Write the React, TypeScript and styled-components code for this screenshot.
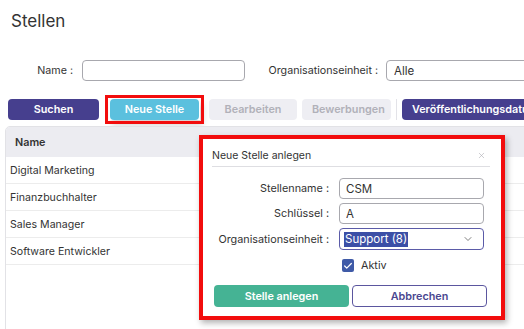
import styled, { createGlobalStyle } from 'styled-components';
import { ChevronDown, Check, X } from 'lucide-react';

const GlobalStyle = createGlobalStyle`
  body {
    margin: 0;
    background: #fff;
    font-family: Inter, 'Noto Sans', sans-serif;
    color: #333;
    overflow: hidden;
  }
  * {
    box-sizing: border-box;
  }
`;

const Page = styled.div`
  width: 524px;
  height: 329px;
  overflow: hidden;
  position: relative;
`;

const Title = styled.h1`
  margin: 0;
  padding: 10px 0 0 11px;
  font-size: 17px;
  font-weight: 400;
  line-height: 22px;
  color: #333;
`;

const FilterRow = styled.div`
  display: flex;
  align-items: center;
  margin-top: 28px;
  height: 21px;
  white-space: nowrap;
`;

const FilterLabel = styled.label<{ $width: number }>`
  width: ${(p) => p.$width}px;
  text-align: right;
  font-size: 10.7px;
  color: #333;
  flex-shrink: 0;
`;

const TextInput = styled.input<{ $width: number }>`
  width: ${(p) => p.$width}px;
  height: 21px;
  flex-shrink: 0;
  border: 1px solid #a8a8ae;
  border-radius: 4px;
  padding: 0 7px;
  font: 11.5px Inter, sans-serif;
  color: #333;
  outline: none;
`;

const ButtonRow = styled.div`
  display: flex;
  align-items: center;
  height: 21px;
  margin-top: 18px;
  padding-left: 8px;
  white-space: nowrap;
`;

const ToolButton = styled.button<{ $variant: 'primary' | 'info' | 'disabled' }>`
  display: block;
  height: 21px;
  flex-shrink: 0;
  border: none;
  border-radius: 4px;
  padding: 0 10px;
  font: 600 10.8px Inter, sans-serif;
  background: ${(p) =>
    p.$variant === 'primary' ? '#463f8e' : p.$variant === 'info' ? '#5bc0de' : '#eeeef3'};
  color: ${(p) => (p.$variant === 'disabled' ? '#b1b1b9' : '#fff')};
`;

const Highlight = styled.div`
  display: flex;
  flex-shrink: 0;
  padding: 0 1px;
  outline: 3px solid #f20d0d;
  outline-offset: 1px;
  box-shadow: 3px 5px 6px rgba(0, 0, 0, 0.18);
`;

const Divider = styled.span`
  width: 1px;
  height: 21px;
  background: #e3e3e8;
  margin: 0 5px;
  flex-shrink: 0;
`;

const TableArea = styled.div`
  position: relative;
  margin: 6px 0 0 5px;
`;

const Table = styled.div`
  width: 540px;
  height: 220px;
  border: 1px solid #e2e2e6;
  border-radius: 5px;
  overflow: hidden;
`;

const HeaderRow = styled.div`
  height: 30px;
  display: flex;
  align-items: center;
  padding-left: 9px;
  background: #ececf1;
  font-size: 10.8px;
  font-weight: 600;
  color: #333;
`;

const Row = styled.div`
  height: 27px;
  display: flex;
  align-items: center;
  padding-left: 4px;
  border-bottom: 1px solid #ececec;
  font-size: 10.6px;
  color: #333;
`;

const Modal = styled.div`
  position: absolute;
  left: 194px;
  top: 9px;
  width: 306px;
  height: 185px;
  background: #fff;
  border: 4px solid #f20d0d;
  box-shadow: 2px 3px 6px rgba(0, 0, 0, 0.3);
  padding: 0 11px 0 9px;
`;

const ModalHeader = styled.div`
  display: flex;
  justify-content: space-between;
  align-items: center;
  height: 28px;
  padding: 5px 4px 0 0;
  border-bottom: 1px solid #dedee2;
  font-size: 10.5px;
  color: #333;
`;

const CloseIcon = styled(X)`
  color: #a8a8ae;
`;

const Form = styled.div`
  display: grid;
  grid-template-columns: 117px 145px;
  column-gap: 10px;
  row-gap: 4px;
  align-items: center;
  margin-top: 11px;
`;

const FormLabel = styled.label`
  text-align: right;
  font-size: 10.8px;
  color: #333;
  white-space: nowrap;
`;

const FormInput = styled.input`
  width: 145px;
  height: 21px;
  border: 1px solid #a8a8ae;
  border-radius: 4px;
  padding: 0 6px;
  font: 11.5px Inter, sans-serif;
  color: #333;
  outline: none;
`;

const Select = styled.div`
  width: 145px;
  height: 22px;
  border: 1px solid #5b5ba8;
  border-radius: 4px;
  padding: 0 9px 0 4px;
  display: flex;
  align-items: center;
  justify-content: space-between;
  font-size: 11.5px;
`;

const Selected = styled.span`
  background: #3b4fa6;
  color: #fff;
  padding: 0 1px;
  line-height: 15px;
`;

const CheckRow = styled.div`
  grid-column: 2;
  display: flex;
  align-items: center;
  gap: 7px;
  margin-top: 5px;
  padding-left: 3px;
  font-size: 10.8px;
`;

const CheckBox = styled.span`
  width: 12px;
  height: 13px;
  border-radius: 2px;
  background: #3f5aa7;
  display: flex;
  align-items: center;
  justify-content: center;
  color: #fff;
`;

const Actions = styled.div`
  display: flex;
  gap: 3px;
  margin: 13px 0 0 2px;
`;

const ActionButton = styled.button<{ $outline?: boolean }>`
  width: 135px;
  height: 22px;
  border-radius: 4px;
  font: 600 10.8px Inter, sans-serif;
  border: ${(p) => (p.$outline ? '1.5px solid #5b569f' : 'none')};
  background: ${(p) => (p.$outline ? '#fff' : '#45b394')};
  color: ${(p) => (p.$outline ? '#4a4790' : '#fff')};
`;

const rows = ['Digital Marketing', 'Finanzbuchhalter', 'Sales Manager', 'Software Entwickler'];

export default function App() {
  return (
    <Page>
      <GlobalStyle />
      <Title>Stellen</Title>
      <FilterRow>
        <FilterLabel $width={73}>Name :</FilterLabel>
        <TextInput $width={163} style={{ marginLeft: 9 }} readOnly value="" />
        <FilterLabel $width={133}>Organisationseinheit :</FilterLabel>
        <TextInput $width={160} style={{ marginLeft: 8 }} readOnly value="Alle" />
      </FilterRow>
      <ButtonRow>
        <ToolButton $variant="primary" style={{ width: 91 }}>Suchen</ToolButton>
        <Highlight style={{ marginLeft: 10 }}>
          <ToolButton $variant="info" style={{ width: 89 }}>Neue Stelle</ToolButton>
        </Highlight>
        <ToolButton $variant="disabled" style={{ width: 88, marginLeft: 9 }}>Bearbeiten</ToolButton>
        <ToolButton $variant="disabled" style={{ width: 89, marginLeft: 5 }}>Bewerbungen</ToolButton>
        <Divider />
        <ToolButton $variant="primary">Veröffentlichungsdatum</ToolButton>
      </ButtonRow>
      <TableArea>
        <Table>
          <HeaderRow>Name</HeaderRow>
          {rows.map((r) => (
            <Row key={r}>{r}</Row>
          ))}
        </Table>
        <Modal>
          <ModalHeader>
            Neue Stelle anlegen
            <CloseIcon size={9} strokeWidth={1.5} />
          </ModalHeader>
          <Form>
            <FormLabel>Stellenname :</FormLabel>
            <FormInput readOnly value="CSM" />
            <FormLabel>Schlüssel :</FormLabel>
            <FormInput readOnly value="A" />
            <FormLabel>Organisationseinheit :</FormLabel>
            <Select>
              <Selected>Support (8)</Selected>
              <ChevronDown size={12} strokeWidth={1.5} color="#555" />
            </Select>
            <CheckRow>
              <CheckBox>
                <Check size={10} strokeWidth={3} />
              </CheckBox>
              Aktiv
            </CheckRow>
          </Form>
          <Actions>
            <ActionButton>Stelle anlegen</ActionButton>
            <ActionButton $outline>Abbrechen</ActionButton>
          </Actions>
        </Modal>
      </TableArea>
    </Page>
  );
}
